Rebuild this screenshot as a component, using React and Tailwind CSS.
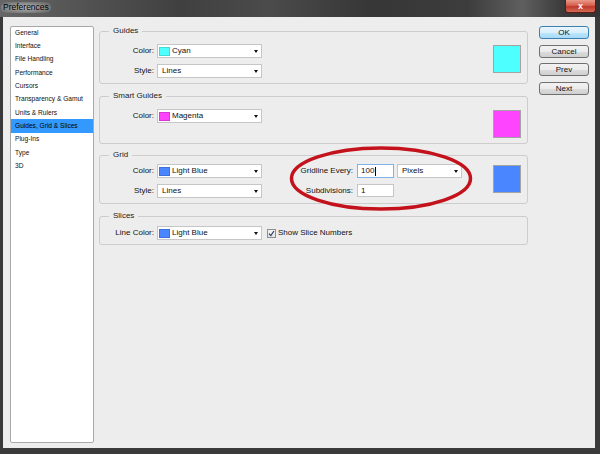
const font = { fontFamily: '"Liberation Sans", Arial, sans-serif' };

const sections = [
  'General',
  'Interface',
  'File Handling',
  'Performance',
  'Cursors',
  'Transparency & Gamut',
  'Units & Rulers',
  'Guides, Grid & Slices',
  'Plug-Ins',
  'Type',
  '3D',
];

function Select({ className = '', chip, children }) {
  return (
    <div className={`flex h-[14px] items-center border border-[#c6c6c6] bg-white ${className}`}>
      {chip ? (
        <span className={`ml-[1px] h-[9px] w-[11px] border border-black/15 ${chip}`} />
      ) : null}
      <span className={chip ? 'ml-[2px]' : 'ml-[4px]'}>{children}</span>
      <span className="ml-auto mr-[3px] h-0 w-0 border-x-[2.5px] border-t-[3px] border-x-transparent border-t-[#111]" />
    </div>
  );
}

function Row({ label, children, className = '' }) {
  return (
    <div className={`flex items-center ${className}`}>
      <span className="w-[54px] text-right">{label}</span>
      <div className="ml-[3px]">{children}</div>
    </div>
  );
}

function Group({ title, className = '', children }) {
  return (
    <fieldset className={`rounded-[3px] border border-[#cdcdcd] p-0 ${className}`}>
      <legend className="ml-[9px] px-[4px] text-[8px] leading-[10px] text-[#222]">{title}</legend>
      {children}
    </fieldset>
  );
}

function Swatch({ color, className = '' }) {
  return <div className={`ml-auto mr-[6px] h-[28px] w-[28px] border border-[#a3a3a3] ${color} ${className}`} />;
}

function Button({ children, primary }) {
  return (
    <button
      type="button"
      className={`h-[13px] w-[50px] rounded-[3px] border text-[8px] leading-[11px] text-[#111] ${
        primary
          ? 'border-[#3c7fb1] bg-[linear-gradient(180deg,#eaf6fd_0%,#d9f0fc_50%,#bee6fd_51%,#a7d9f5_100%)]'
          : 'border-[#707070] bg-[linear-gradient(180deg,#f2f2f2_0%,#ebebeb_50%,#dddddd_51%,#cfcfcf_100%)]'
      }`}
    >
      {children}
    </button>
  );
}

export default function App() {
  return (
    <div style={font} className="relative flex h-[454px] w-[600px] flex-col overflow-hidden bg-[#3a3a3a]">
      {/* title bar */}
      <div className="flex h-[17px] items-start bg-[linear-gradient(90deg,#666_0%,#555_12%,#404040_30%,#4b4b4b_45%,#363636_62%,#3d3d3d_78%,#5f5f5f_87%,#3a3a3a_94%,#333_100%)]">
        <span className="ml-[1px] mt-[2px] rounded-[6px] bg-[radial-gradient(ellipse_at_center,rgba(255,255,255,0.55)_0%,rgba(255,255,255,0.25)_55%,rgba(255,255,255,0)_100%)] px-[2px] text-[8.5px] leading-[11px] text-black">
          Preferences
        </span>
        <div className="ml-auto mr-[4px] flex h-[13px] w-[31px] items-center justify-center rounded-b-[3px] border border-t-0 border-[#5a1c14] bg-[linear-gradient(180deg,#e99a8a_0%,#d6604c_45%,#c0392b_55%,#d46a55_100%)] text-[9px] font-bold leading-none text-white">
          x
        </div>
      </div>

      {/* body */}
      <div className="mb-[6px] ml-[3px] mr-[5px] flex flex-1 bg-[#ededed] pl-[7px] text-[8px] text-[#111]">
        <div className="mb-[5px] mt-[9px] w-[84px] rounded-[2px] border border-[#a8a8a8] bg-white">
          <ul className="-mt-px text-[6.6px]">
            {sections.map((s) => (
              <li
                key={s}
                className={`flex h-[13.333px] items-center pl-[4px] ${
                  s === 'Guides, Grid & Slices' ? 'bg-[#3399ff] text-black' : ''
                }`}
              >
                {s}
              </li>
            ))}
          </ul>
        </div>

        <div className="ml-[5px] mt-[9px] flex w-[429px] flex-col">
          <Group title="Guides">
            <div className="flex items-start pb-[5px] pt-[8px]">
              <div className="flex flex-col gap-[6px]">
                <Row label="Color:">
                  <Select className="w-[105px]" chip="bg-[#4dffff]">Cyan</Select>
                </Row>
                <Row label="Style:">
                  <Select className="w-[105px]">Lines</Select>
                </Row>
              </div>
              <Swatch color="bg-[#4dffff]" className="mt-[1px]" />
            </div>
          </Group>

          <Group title="Smart Guides" className="mt-[7px]">
            <div className="flex items-start pb-[5px] pt-[8px]">
              <Row label="Color:">
                <Select className="w-[105px]" chip="bg-[#ff44ff]">Magenta</Select>
              </Row>
              <Swatch color="bg-[#ff44ff]" className="mt-[1px]" />
            </div>
          </Group>

          <Group title="Grid" className="mt-[6px]">
            <div className="flex items-start pb-[5px] pt-[4px]">
              <div className="flex flex-col gap-[6px]">
                <Row label="Color:">
                  <Select className="w-[105px]" chip="bg-[#4a86ff]">Light Blue</Select>
                </Row>
                <Row label="Style:">
                  <Select className="w-[105px]">Lines</Select>
                </Row>
              </div>
              <div className="ml-[31px] flex flex-col gap-[6px]">
                <div className="flex items-center">
                  <span className="w-[60px] text-right">Gridline Every:</span>
                  <div className="ml-[4px] flex h-[14px] w-[37px] items-center border border-[#7fb3e6] bg-white pl-[3px]">
                    100
                    <span className="ml-[0.5px] h-[9px] w-px bg-black" />
                  </div>
                  <Select className="ml-[3px] w-[65px]">Pixels</Select>
                </div>
                <div className="flex items-center">
                  <span className="w-[60px] text-right">Subdivisions:</span>
                  <div className="ml-[4px] flex h-[13px] w-[37px] items-center border border-[#c6c6c6] bg-white pl-[3px]">
                    1
                  </div>
                </div>
              </div>
              <Swatch color="bg-[#4a86ff]" className="mt-[1px]" />
            </div>
          </Group>

          <Group title="Slices" className="mt-[7px]">
            <div className="flex items-center pb-[4px] pt-[5px]">
              <Row label="Line Color:">
                <Select className="w-[105px]" chip="bg-[#4a86ff]">Light Blue</Select>
              </Row>
              <span className="ml-[5px] flex h-[9px] w-[9px] items-center justify-center border border-[#8e8f8f] bg-[linear-gradient(180deg,#f4f4f4,#e2e2e2)]">
                <svg width="7" height="7" viewBox="0 0 7 7">
                  <path d="M1 3.6 L2.8 5.6 L6 1" fill="none" stroke="#2a3f6a" strokeWidth="1.2" />
                </svg>
              </span>
              <span className="ml-[2px]">Show Slice Numbers</span>
            </div>
          </Group>
        </div>

        <div className="ml-[11px] mt-[9px] flex flex-col gap-[5.6px]">
          <Button primary>OK</Button>
          <Button>Cancel</Button>
          <Button>Prev</Button>
          <Button>Next</Button>
        </div>
      </div>

      {/* red annotation ellipse */}
      <svg className="pointer-events-none absolute left-0 top-0" width="600" height="454">
        <ellipse cx="381" cy="178.5" rx="89.5" ry="30.5" fill="none" stroke="#c3121c" strokeWidth="3.5" />
      </svg>
    </div>
  );
}
